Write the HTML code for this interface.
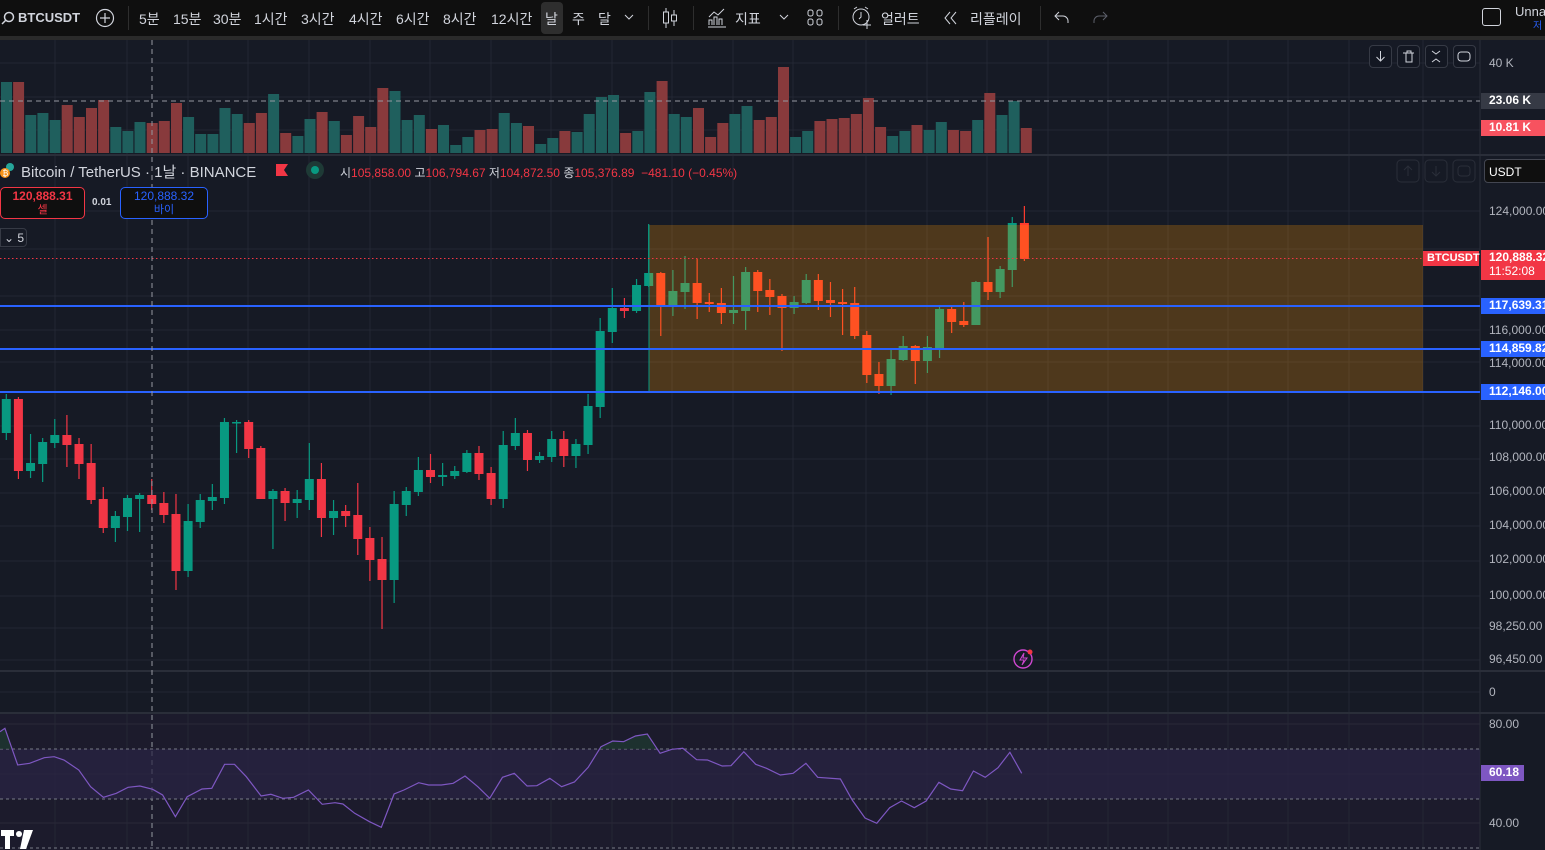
<!DOCTYPE html>
<html><head><meta charset="utf-8">
<style>
*{margin:0;padding:0;box-sizing:border-box}
body{width:1545px;height:850px;overflow:hidden;background:#161a25;font-family:"Liberation Sans","Noto Sans CJK KR",sans-serif;color:#d1d4dc;position:relative}
.tb{position:absolute;left:0;top:0;width:1545px;height:36px;background:#0f0f0f;font-size:14px}
.tb span{position:absolute;top:9px;white-space:nowrap}
.sep{position:absolute;top:6px;width:1px;height:24px;background:#2e2e2e}
.strip{position:absolute;left:0;top:36px;width:1545px;height:4px;background:#2a2a2a}
.ax{position:absolute;font-size:12px;color:#b2b5be;left:1489px;white-space:nowrap}
.tag{position:absolute;font-size:12px;color:#fff;font-weight:bold;padding-left:8px;line-height:15px;left:1481px;width:64px;white-space:nowrap;overflow:hidden}
.btn{position:absolute;width:23px;height:23px;border:1px solid #363a45;border-radius:4px;background:#131722}
</style></head><body>
<svg id="s" width="1545" height="850" style="position:absolute;left:0;top:0"></svg>

<div class="tb">
<svg style="position:absolute;left:1px;top:11px" width="14" height="14"><circle cx="8" cy="6" r="4.5" fill="none" stroke="#d1d4dc" stroke-width="1.5"/><line x1="4.5" y1="9.5" x2="1" y2="13" stroke="#d1d4dc" stroke-width="1.5"/></svg>
<span style="left:18px;font-weight:bold;font-size:13px;top:10px">BTCUSDT</span>
<svg style="position:absolute;left:95px;top:8px" width="20" height="20"><circle cx="10" cy="10" r="8.5" fill="none" stroke="#d1d4dc" stroke-width="1.2"/><path d="M10 5v10M5 10h10" stroke="#d1d4dc" stroke-width="1.2"/></svg>
<div class="sep" style="left:128px"></div>
<span style="left:139px">5분</span><span style="left:173px">15분</span><span style="left:213px">30분</span><span style="left:254px">1시간</span><span style="left:301px">3시간</span><span style="left:349px">4시간</span><span style="left:396px">6시간</span><span style="left:443px">8시간</span><span style="left:491px">12시간</span>
<div style="position:absolute;left:541px;top:2px;width:22px;height:32px;background:#2e2e2e;border-radius:4px"></div>
<span style="left:545px">날</span><span style="left:572px">주</span><span style="left:598px">달</span>
<svg style="position:absolute;left:624px;top:13px" width="10" height="8"><path d="M1 2l4 4 4-4" fill="none" stroke="#d1d4dc"/></svg>
<div class="sep" style="left:648px"></div>
<svg style="position:absolute;left:661px;top:7px" width="18" height="22"><path d="M5 1v20M13 3v16" stroke="#d1d4dc"/><rect x="2.5" y="5" width="5" height="11" fill="#0f0f0f" stroke="#d1d4dc"/><rect x="10.5" y="8" width="5" height="6" fill="#0f0f0f" stroke="#d1d4dc"/></svg>
<div class="sep" style="left:693px"></div>
<svg style="position:absolute;left:706px;top:7px" width="22" height="22"><path d="M2 20h18M3 18v-5h3v5M8 18v-8h3v8M13 18v-6h3v6M3 10l5-5 4 3 6-6" fill="none" stroke="#d1d4dc"/></svg>
<span style="left:735px">지표</span>
<svg style="position:absolute;left:779px;top:13px" width="10" height="8"><path d="M1 2l4 4 4-4" fill="none" stroke="#d1d4dc"/></svg>
<svg style="position:absolute;left:807px;top:9px" width="16" height="18"><rect x="1" y="1" width="5" height="6" rx="2" fill="none" stroke="#d1d4dc"/><rect x="10" y="1" width="5" height="6" rx="2" fill="none" stroke="#d1d4dc"/><rect x="1" y="10" width="5" height="6" rx="2" fill="none" stroke="#d1d4dc"/><rect x="10" y="10" width="5" height="6" rx="2" fill="none" stroke="#d1d4dc"/></svg>
<div class="sep" style="left:838px"></div>
<svg style="position:absolute;left:851px;top:6px" width="22" height="24"><circle cx="10" cy="11" r="8" fill="none" stroke="#d1d4dc"/><path d="M10 6v5l-2 2M3 3l3-2M17 3l-3-2M16 14v9M12 19h8" fill="none" stroke="#d1d4dc"/></svg>
<span style="left:881px">얼러트</span>
<svg style="position:absolute;left:943px;top:11px" width="16" height="14"><path d="M7 1L2 7l5 6M13 1L8 7l5 6" fill="none" stroke="#d1d4dc"/></svg>
<span style="left:970px">리플레이</span>
<div class="sep" style="left:1040px"></div>
<svg style="position:absolute;left:1054px;top:10px" width="16" height="14"><path d="M5 2L1 6l4 4M1 6h8a5 5 0 0 1 5 5v2" fill="none" stroke="#d1d4dc"/></svg>
<svg style="position:absolute;left:1092px;top:10px" width="16" height="14"><path d="M11 2l4 4-4 4M15 6H7a5 5 0 0 0-5 5v2" fill="none" stroke="#5d606b"/></svg>
<div style="position:absolute;left:1482px;top:8px;width:19px;height:18px;border:1.5px solid #d1d4dc;border-radius:3px"></div>
<span style="left:1515px;top:4px;font-size:13px">Unna</span>
<span style="left:1533px;top:17px;font-size:10px;color:#2962ff">저</span>
</div>
<div class="strip"></div>

<div class="ax" style="top:56px">40 K</div>
<div class="tag" style="top:93px;background:#363a45;height:16px">23.06 K</div>
<div class="tag" style="top:120px;background:#f7525f;height:16px">10.81 K</div>
<div style="position:absolute;left:1484px;top:159px;width:70px;height:24px;border:1px solid #434651;border-radius:4px;background:#0f0f0f;font-size:12px;padding:5px 0 0 4px;color:#fff">USDT</div>
<div class="ax" style="top:204px">124,000.00</div>
<div style="position:absolute;left:1423px;top:251px;width:56px;height:15px;background:#f23645;color:#fff;font-size:11px;font-weight:bold;line-height:15px;padding-left:4px">BTCUSDT</div>
<div class="tag" style="top:250px;background:#f23645;height:30px;padding-left:8px;line-height:14px">120,888.32<br><span style="font-weight:normal">11:52:08</span></div>
<div class="tag" style="top:298px;background:#2962ff;height:16px">117,639.31</div>
<div class="ax" style="top:323px">116,000.00</div>
<div class="tag" style="top:341px;background:#2962ff;height:16px">114,859.82</div>
<div class="ax" style="top:356px">114,000.00</div>
<div class="tag" style="top:384px;background:#2962ff;height:16px">112,146.00</div>
<div class="ax" style="top:418px">110,000.00</div>
<div class="ax" style="top:450px">108,000.00</div>
<div class="ax" style="top:484px">106,000.00</div>
<div class="ax" style="top:518px">104,000.00</div>
<div class="ax" style="top:552px">102,000.00</div>
<div class="ax" style="top:588px">100,000.00</div>
<div class="ax" style="top:619px">98,250.00</div>
<div class="ax" style="top:652px">96,450.00</div>
<div class="ax" style="top:685px">0</div>
<div class="ax" style="top:717px">80.00</div>
<div class="tag" style="top:765px;background:#7e57c2;height:16px;width:43px">60.18</div>
<div class="ax" style="top:816px">40.00</div>

<div class="btn" style="left:1369px;top:45px"></div><div class="btn" style="left:1397px;top:45px"></div><div class="btn" style="left:1425px;top:45px"></div><div class="btn" style="left:1453px;top:45px"></div>
<svg style="position:absolute;left:1369px;top:45px" width="110" height="23"><g fill="none" stroke="#d1d4dc"><path d="M11.5 6v10M7.5 12l4 4 4-4"/><path d="M34 8h11M37 8v9h6V8M38 8V6h4v2"/><path d="M63 6l4 3 4-3M63 17l4-3 4 3"/><rect x="89" y="7" width="12" height="9" rx="3"/></g></svg>
<svg style="position:absolute;left:1396px;top:159px" width="84" height="24"><g fill="none" stroke="#2a2e39"><rect x="1" y="1" width="22" height="22" rx="4"/><rect x="29" y="1" width="22" height="22" rx="4"/><rect x="57" y="1" width="22" height="22" rx="4"/><path d="M12 7v10M8 11l4-4 4 4M40 7v10M36 13l4 4 4-4"/><rect x="62" y="7" width="12" height="10" rx="3"/></g></svg>

<svg style="position:absolute;left:0;top:162px" width="16" height="18"><circle cx="10" cy="5" r="4" fill="#26a69a"/><circle cx="5" cy="11" r="5" fill="#f7931a"/><text x="2.5" y="14" font-size="8" fill="#fff" font-family="Liberation Sans">₿</text></svg>
<div style="position:absolute;left:21px;top:161px;font-size:15px;color:#d1d4dc;white-space:nowrap">Bitcoin / TetherUS · 1날 · BINANCE</div>
<svg style="position:absolute;left:275px;top:163px" width="14" height="14"><path d="M1 1h12l-4 6 4 6H1z" fill="#f23645"/></svg>
<svg style="position:absolute;left:305px;top:160px" width="20" height="20"><circle cx="10" cy="10" r="9" fill="#1e3a36"/><circle cx="10" cy="10" r="4" fill="#089981"/></svg>
<div style="position:absolute;left:340px;top:164px;font-size:12px;white-space:nowrap;color:#d1d4dc">시<span style="color:#f23645">105,858.00</span> 고<span style="color:#f23645">106,794.67</span> 저<span style="color:#f23645">104,872.50</span> 종<span style="color:#f23645">105,376.89 &nbsp;−481.10 (−0.45%)</span></div>

<div style="position:absolute;left:0;top:187px;width:85px;height:32px;border:1px solid #f23645;border-radius:5px;background:#0f0f0f;text-align:center;color:#f23645;font-size:12px;line-height:13px;padding-top:2px"><b>120,888.31</b><br><span style="font-size:11px">셀</span></div>
<div style="position:absolute;left:92px;top:197px;font-size:10px;font-weight:bold;color:#d1d4dc">0.01</div>
<div style="position:absolute;left:120px;top:187px;width:88px;height:32px;border:1px solid #2962ff;border-radius:5px;background:#0f0f0f;text-align:center;color:#2962ff;font-size:12px;line-height:13px;padding-top:2px">120,888.32<br><span style="font-size:11px">바이</span></div>
<div style="position:absolute;left:0;top:228px;width:27px;height:19px;border:1px solid #363a45;border-radius:0 4px 4px 0;background:#161a25;font-size:12px;color:#d1d4dc;padding:2px 0 0 3px">⌄ 5</div>

<svg style="position:absolute;left:0;top:829px" width="34" height="21"><path d="M1 1h13v6h-4v13H5V7H1z" fill="#fff"/><circle cx="19" cy="5" r="3" fill="#fff"/><path d="M24 1h9l-7 19h-6z" fill="#fff"/></svg>
<svg style="position:absolute;left:1012px;top:647px" width="24" height="24"><circle cx="11" cy="12" r="9" fill="none" stroke="#ce47d0" stroke-width="1.4"/><path d="M12 6l-4 7h4l-2 5 5-7h-4z" fill="none" stroke="#ce47d0"/><circle cx="18" cy="5" r="2.5" fill="#f23645"/></svg>

<script>
var s=document.getElementById('s'),h='';
function R(x,y,w,hh,c,o){h+='<rect x="'+x+'" y="'+y+'" width="'+w+'" height="'+hh+'" fill="'+c+'"'+(o?' opacity="'+o+'"':'')+'/>';}
function L(x1,y1,x2,y2,c,w,d){h+='<line x1="'+x1+'" y1="'+y1+'" x2="'+x2+'" y2="'+y2+'" stroke="'+c+'" stroke-width="'+(w||1)+'"'+(d?' stroke-dasharray="'+d+'"':'')+'/>';}
R(0,40,1480,115,'#161a25');R(0,672,1480,41,'#161a25');R(0,714,1480,136,'#1c1b2c');
var vx=[55,127,188,248,309,370,430,491,551,612,672,733,793,866,927,987,1048,1108,1168,1228,1288,1349,1423];
vx.forEach(function(x){L(x,40,x,850,'#232734');});
[63,97,130].forEach(function(y){L(0,y,1480,y,'#232734');});
[211,249,296,330,362,426,459,493,526,561,596,628,660].forEach(function(y){L(0,y,1480,y,'#232734');});
L(0,692,1480,692,'#232734');L(0,724,1480,724,'#2a2838');L(0,774,1480,774,'#2a2838');L(0,823,1480,823,'#2a2838');
L(0,155,1545,155,'#2a2e39',2);L(0,671,1545,671,'#2a2e39',2);L(0,713,1545,713,'#2a2e39',2);L(1480,40,1480,850,'#2a2e39');
var vt=[66,66,165,159,180,135,171,144,120,201,213,186,189,183,129,171,222,222,144,162,189,159,102,219,228,177,156,183,225,168,201,84,93,180,165,207,195,255,231,210,207,159,189,
198,252,234,213,216,162,111,105,219,213,96,63,162,171,144,231,189,162,138,180,171,21,231,213,183,177,174,162,114,201,228,213,195,210,186,210,213,180,99,165,123,204];
var vc="tRtttRRRRtttRRRtttttRRtRttRtRRRRtttRtttRRtt"+"RttRttttRttRttRRRttRRRttRRRRRRttRttRRtRttR";
for(var i=0;i<vt.length;i++){var y=60+vt[i]/3;R((1+12.14*i).toFixed(1),y,11,153-y,vc[i]=='t'?'#1f5f5d':'#883a3c');}
L(0,101,1480,101,'#9598a1',1,'5 4');
var C=[['g',399,433,394,440],['r',399,471,397,479],['g',463,471,434,478],['g',442,464,438,482],['g',435,443,419,448],['r',435,445,415,467],['r',444,464,438,479],['r',463,500,444,504],['r',499,528,487,533],['g',516,528,511,542],
['g',498,517,495,531],['g',495,499,493,532],['r',495,504,479,510],['r',503,515,492,523],['r',514,571,494,590],['g',521,571,504,577],['g',500,522,494,528],['g',497,501,484,510],['g',422,498,418,504],['g',422,423,420,453],
['r',422,449,420,458],['r',448,499,446,499],['g',491,499,489,549],['r',491,503,488,521],['g',499,503,490,518],['g',479,500,443,510],['r',479,518,463,537],['g',511,518,500,535],['r',511,516,505,527],['r',515,539,483,555],
['r',538,560,527,581],['r',559,580,537,629],['g',504,580,491,603],['g',491,505,487,516],['g',470,492,457,496],['r',470,477,454,483],['g',475,477,463,486],['g',471,476,466,479],['g',453,472,450,473],['r',453,474,446,480],
['r',473,499,467,505],['g',445,499,431,508],['g',433,446,418,450],['r',433,460,430,471],['g',456,460,452,463],['g',439,457,431,462],['r',439,456,431,467],['g',444,456,439,468],['g',406,445,394,454],['g',331,407,318,418],
['g',308,332,288,343],['r',308,311,298,318],['g',285,311,279,313],['g',273,286,224,287],['r',273,305,272,336],['g',291,305,270,316],['g',283,292,256,309],['r',283,303,259,319],['r',302,304,293,312],['r',303,313,288,324],
['g',310,313,276,324],['g',272,311,267,330],['r',272,291,270,312],['r',290,297,279,315],['r',296,308,294,351],['g',302,308,296,314],['g',280,303,274,304],['r',280,301,274,310],['r',300,303,282,317],['r',302,304,289,335],
['r',303,336,287,339],['r',335,375,331,383],['r',374,386,362,394],['g',359,386,350,395],['g',346,360,336,361],['r',346,361,345,384],['g',347,361,336,373],['g',309,348,307,358],['r',309,322,307,333],['r',321,325,302,327],
['g',282,325,281,325],['r',282,292,237,300],['g',269,292,266,298],['g',223,270,217,287],['r',223,259,206,261]];
for(var i=0;i<C.length;i++){var c=C[i],x=6.3+12.12*i,col=c[0]=='g'?'#089981':(i>=53?'#ff3b2e':'#f23645');
L(x,c[3],x,c[4],col,1.2);R(x-4.5,c[1],9,Math.max(1.5,c[2]-c[1]),col);}
R(649,225,774,167,'rgb(255,152,0)',0.245);
L(649,225,649,392,'#089981',1);
L(0,258.5,1423,258.5,'#f23645',1,'1.5 2.5');
[306,349,392].forEach(function(y){L(0,y,1480,y,'#2962ff',2);});
L(152,40,152,850,'#9598a1',1,'5 4');
R(0,749,1480,50,'#2a2445',0.7);
L(0,749,1480,749,'#787b86',1,'3 3');L(0,799,1480,799,'#787b86',1,'3 3');L(0,848,1480,848,'#787b86',1,'3 3');
var P=[[0,215],[5,205],[18,315],[30,310],[45,293],[55,290],[65,300],[80,330],[92,380],[105,412],[118,400],[130,382],[142,378],[155,388],[165,405],[178,470],[190,410],[205,387],[215,385],[228,313],[238,313],[250,350],[265,408],[275,403],[287,415],[298,412],[313,390],[327,433],[340,428],[348,432],[360,460],[375,485],[387,502],[400,402],[410,390],[425,368],[435,375],[448,375],[460,370],[472,348],[485,380],[497,415],[510,352],[522,340],[535,378],[545,377],[558,355],[570,380],[583,366],[597,322],[610,260],[622,243],[633,245],[645,228],[657,222],[670,280],[682,268],[693,265],[707,299],[718,300],[733,318],[742,317],[755,275],[767,313],[778,325],[792,345],[805,340],[818,310],[830,352],[853,357],[865,420],[878,474],[890,490],[903,443],[915,423],[928,443],[940,423],[953,367],[965,387],[977,392],[988,333],[1000,352],[1013,323],[1025,277],[1037,340]];
var d=P.map(function(p,k){return (k?'L':'M')+(p[0]/1.015).toFixed(1)+' '+(660+p[1]/3).toFixed(1);}).join('');
h+='<path d="M0 749L0 731L5 728L12 749Z" fill="#1e3a30" opacity="0.7"/><path d="M598 749L601 747L613 741L624 742L636 736L647 734L656 749Z" fill="#1e3a30" opacity="0.7"/>';
h+='<path d="'+d+'" fill="none" stroke="#7e57c2" stroke-width="1.2"/>';
s.innerHTML=h;
</script>
</body></html>
